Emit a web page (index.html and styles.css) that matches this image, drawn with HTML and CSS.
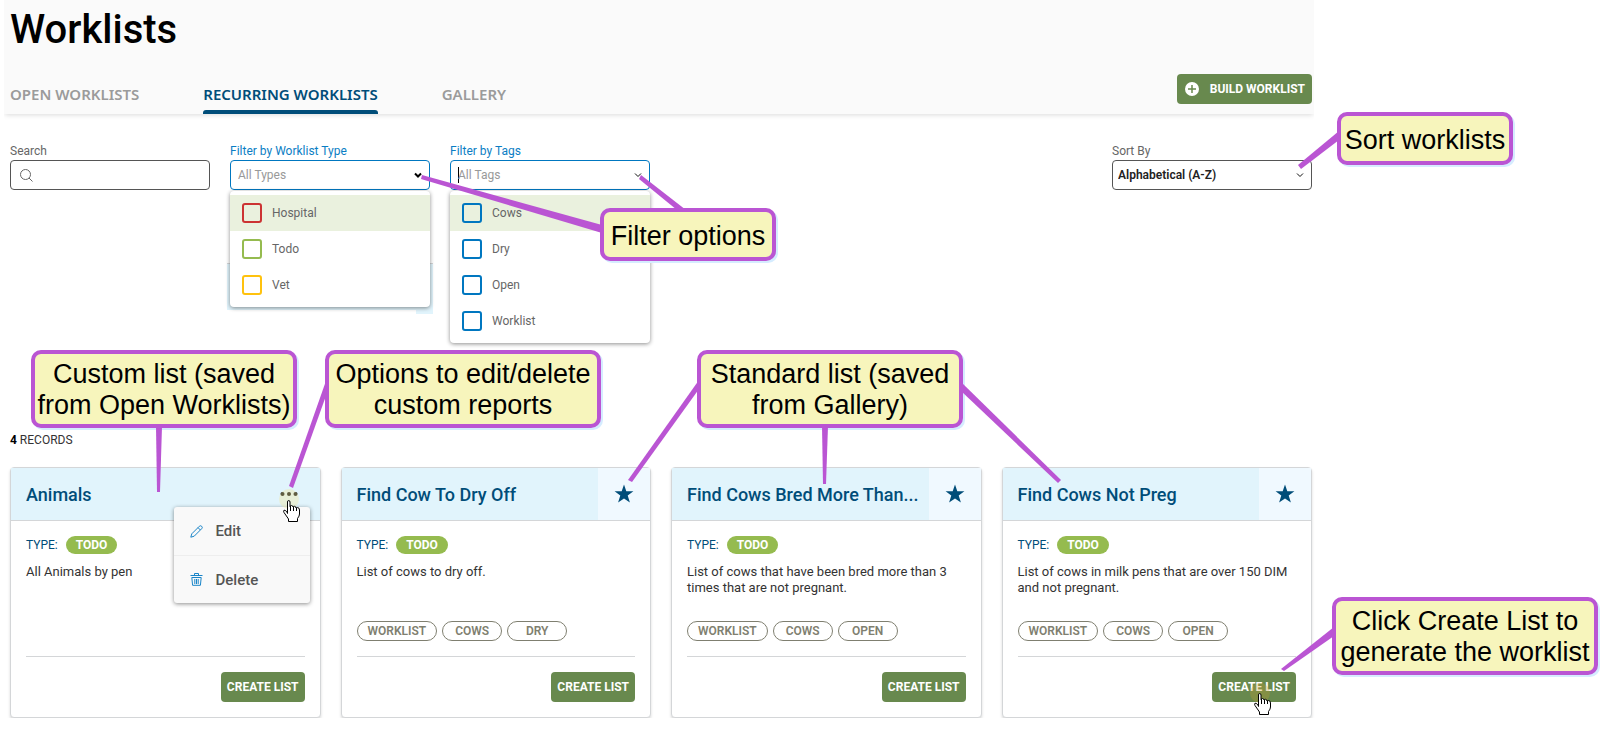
FILE: index.html
```
<!DOCTYPE html>
<html lang="en">
<head>
  <meta charset="UTF-8">
  <title>Worklists</title>
  <link rel="stylesheet" href="styles.css">
</head>
<body>

  <svg class="sprite" aria-hidden="true">
    <symbol id="star" viewBox="0 0 20 20">
      <path d="M10 0.5 L12.3 7.3 H19.4 L13.7 11.5 L15.9 18.6 L10 14.4 L4.1 18.6 L6.3 11.5 L0.6 7.3 H7.7 Z"/>
    </symbol>
    <symbol id="chevron" viewBox="0 0 8 8">
      <path d="M1 2.5 L4 5.5 L7 2.5" fill="none" stroke="currentColor"/>
    </symbol>
    <symbol id="hand" viewBox="0 0 17 22">
      <path d="M4.5 13.5 V2 Q4.5 0.5 5.7 0.5 T7 2 V6.5 Q7.2 5.5 8.5 5.5 T10 7 Q10.2 6.3 11.5 6.3 T13 8 Q13.3 7.5 14.3 7.5 Q16.5 7.5 16.5 10 V14 Q16.5 16 14.5 18.5 V21.5 H5.5 V19 L1 12.5 Q0.2 11 1 10.2 Q2.5 9.5 4.5 13 Z" fill="#fff" stroke="#000"/>
      <path d="M7.5 6 V11 M10.5 7 V11 M13.5 8 V11" fill="none" stroke="#000"/>
    </symbol>
  </svg>

  <div class="app">
    <header>
      <h1>Worklists</h1>
      <div class="bar">
        <nav>
          <a href="#open">OPEN WORKLISTS</a>
          <a href="#recurring" class="active">RECURRING WORKLISTS</a>
          <a href="#gallery">GALLERY</a>
        </nav>
        <button class="btn build" type="button">
          <svg width="14" height="14" viewBox="0 0 14 14"><circle cx="7" cy="7" r="7" fill="#fff"/><path d="M7 3 V11 M3 7 H11" stroke="#68894e" stroke-width="1.5"/></svg>
          BUILD WORKLIST
        </button>
      </div>
    </header>

    <main>
      <form class="filters">
        <div class="field">
          <label for="search">Search</label>
          <div class="box">
            <svg width="13" height="13" viewBox="0 0 13 13" fill="none" stroke="#666"><circle cx="5.5" cy="5.5" r="5"/><path d="M9 9 L12.5 12.5"/></svg>
            <input type="text" id="search">
          </div>
        </div>

        <div class="field open">
          <label for="types">Filter by Worklist Type</label>
          <div class="box">
            <input type="text" id="types" placeholder="All Types">
            <svg class="chevron dark"><use href="#chevron"/></svg>
          </div>
          <div class="under"></div>
          <div class="options">
            <label class="hover"><input type="checkbox" class="red">Hospital</label>
            <label><input type="checkbox" class="green">Todo</label>
            <label><input type="checkbox" class="yellow">Vet</label>
          </div>
        </div>

        <div class="field open">
          <label for="tags">Filter by Tags</label>
          <div class="box">
            <span class="caret"></span>
            <input type="text" id="tags" placeholder="All Tags">
            <svg class="chevron"><use href="#chevron"/></svg>
          </div>
          <div class="options">
            <label class="hover"><input type="checkbox">Cows</label>
            <label><input type="checkbox">Dry</label>
            <label><input type="checkbox">Open</label>
            <label><input type="checkbox">Worklist</label>
          </div>
        </div>

        <div class="field sort">
          <label for="sort">Sort By</label>
          <div class="box">
            <select id="sort">
              <option>Alphabetical (A-Z)</option>
            </select>
            <svg class="chevron"><use href="#chevron"/></svg>
          </div>
        </div>
      </form>

      <p class="records"><b>4</b> RECORDS</p>

      <div class="cards">
        <article class="card">
          <div class="card-head">
            <h2>Animals</h2>
            <button class="more" type="button" aria-label="Options">
              <svg width="18" height="4" viewBox="0 0 18 4"><circle cx="2.5" cy="2" r="2"/><circle cx="9" cy="2" r="2"/><circle cx="15.5" cy="2" r="2"/></svg>
            </button>
            <div class="menu">
              <button type="button">
                <svg width="13" height="13" viewBox="0 0 13 13" fill="none" stroke="#1a85c8"><path d="M0.8 12.2 L1.8 8.8 L9.3 1.3 Q10.5 0.2 11.7 1.3 T11.7 3.7 L4.2 11.2 Z M8 2.6 L10.4 5"/></svg>
                Edit
              </button>
              <button type="button">
                <svg width="13" height="13" viewBox="0 0 13 13" fill="none" stroke="#1a85c8"><path d="M0.5 2.5 H12.5 M4.5 2 V0.5 H8.5 V2 M1.8 4.5 H11.2 L10.4 12.3 H2.6 Z M4.8 6 V11 M6.5 6 V11 M8.2 6 V11"/></svg>
                Delete
              </button>
            </div>
          </div>
          <div class="card-body">
            <p class="type">TYPE: <span class="badge">TODO</span></p>
            <p class="desc">All Animals by pen</p>
            <div class="tags"></div>
            <div class="card-foot"><button class="btn" type="button">CREATE LIST</button></div>
          </div>
        </article>

        <article class="card">
          <div class="card-head">
            <h2>Find Cow To Dry Off</h2>
            <button class="fav" type="button" aria-label="Favorite"><svg width="20" height="20"><use href="#star"/></svg></button>
          </div>
          <div class="card-body">
            <p class="type">TYPE: <span class="badge">TODO</span></p>
            <p class="desc">List of cows to dry off.</p>
            <div class="tags"><span>WORKLIST</span><span>COWS</span><span>DRY</span></div>
            <div class="card-foot"><button class="btn" type="button">CREATE LIST</button></div>
          </div>
        </article>

        <article class="card">
          <div class="card-head">
            <h2>Find Cows Bred More Than...</h2>
            <button class="fav" type="button" aria-label="Favorite"><svg width="20" height="20"><use href="#star"/></svg></button>
          </div>
          <div class="card-body">
            <p class="type">TYPE: <span class="badge">TODO</span></p>
            <p class="desc">List of cows that have been bred more than 3 times that are not pregnant.</p>
            <div class="tags"><span>WORKLIST</span><span>COWS</span><span>OPEN</span></div>
            <div class="card-foot"><button class="btn" type="button">CREATE LIST</button></div>
          </div>
        </article>

        <article class="card">
          <div class="card-head">
            <h2>Find Cows Not Preg</h2>
            <button class="fav" type="button" aria-label="Favorite"><svg width="20" height="20"><use href="#star"/></svg></button>
          </div>
          <div class="card-body">
            <p class="type">TYPE: <span class="badge">TODO</span></p>
            <p class="desc">List of cows in milk pens that are over 150 DIM and not pregnant.</p>
            <div class="tags"><span>WORKLIST</span><span>COWS</span><span>OPEN</span></div>
            <div class="card-foot"><button class="btn" type="button">CREATE LIST</button></div>
          </div>
        </article>
      </div>
    </main>
  </div>

  <div class="callout c-filter">Filter options</div>
  <div class="callout c-sort">Sort worklists</div>
  <div class="callout two c-custom">Custom list (saved<br>from Open Worklists)</div>
  <div class="callout two c-options">Options to edit/delete<br>custom reports</div>
  <div class="callout two c-standard">Standard list (saved<br>from Gallery)</div>
  <div class="callout two c-create">Click Create List to<br>generate the worklist</div>

  <!-- callout pointers and mouse cursors -->
  <svg class="pointers" width="1615" height="735" viewBox="0 0 1615 735">
    <g fill="#ba55d3">
      <path d="M422 175 L602 225 V233 L421 179 Z"/>
      <path d="M641 175 L686 210 H677 L639 179 Z"/>
      <path d="M1298 165 L1339 131 V140 L1301 169 Z"/>
      <path d="M156 426 H162 L160 492 H157 Z"/>
      <path d="M289 486 L327 378 V393 L293 488 Z"/>
      <path d="M628 480 L699 380 V389 L632 482 Z"/>
      <path d="M822 426 H828 L826 484 H823 Z"/>
      <path d="M961 382 L1061 480 L1058 483 L961 391 Z"/>
      <path d="M1281 669 L1334 627 V636 L1284 671 Z"/>
    </g>
    <circle cx="289" cy="499" r="10" fill="#f0e6a0" fill-opacity="0.4"/>
    <use href="#hand" x="283" y="500" width="17" height="22"/>
    <circle cx="1260" cy="693" r="10" fill="#c8a030" fill-opacity="0.3"/>
    <use href="#hand" x="1254" y="693" width="17" height="22"/>
  </svg>

</body>
</html>
```

FILE: styles.css
```
* {
  box-sizing: border-box;
}

body {
  margin: 0;
  background-color: #fff;
  color: #333;
  font-family: Roboto, "Liberation Sans", sans-serif;
  font-size: 13px;
  line-height: 16px;
}

h1, h2, p {
  margin: 0;
}

button, input, select {
  font-family: inherit;
}

.sprite {
  display: none;
}

/* room on the right for the callouts */
.app {
  margin-right: 301px;
}

header {
  margin-left: 4px;
  padding: 6px 2px 0 6px;
  background-color: #fafafa;
  box-shadow: 0 2px 5px -1px rgba(0,0,0,0.15);
  clip-path: inset(0 0 -8px 0);
}

h1 {
  color: #000;
  font-size: 40px;
  line-height: 48px;
  font-weight: 500;
}

.bar {
  display: flex;
  justify-content: space-between;
  align-items: flex-start;
  margin-top: 20px;
}

nav {
  display: flex;
  gap: 64px;
}

nav a {
  position: relative;
  height: 40px;
  padding-top: 10px;
  color: #9b9b9b;
  font-family: "Noto Sans", sans-serif;
  font-size: 15px;
  line-height: 20px;
  font-weight: 600;
  text-decoration: none;
}

nav a.active {
  color: #004d79;
}

nav a.active::after {
  content: "";
  position: absolute;
  left: 0;
  right: 0;
  bottom: 0;
  height: 4px;
  border-radius: 3px 3px 0 0;
  background-color: #004d79;
}

.btn {
  height: 30px;
  padding: 0 6px;
  border: none;
  border-radius: 4px;
  background-color: #68894e;
  color: #fff;
  font-size: 12px;
  font-weight: 700;
  cursor: pointer;
}

.build {
  display: flex;
  align-items: center;
  gap: 11px;
  padding: 0 7px 0 8px;
}

main {
  padding: 29px 2px 0 10px;
}

.filters {
  display: flex;
  gap: 20px;
}

.field {
  position: relative;
  width: 200px;
  color: #666;
  font-size: 12px;
}

.field > label {
  display: block;
  margin-bottom: 1px;
}

.open > label {
  color: #0b7ec4;
}

.sort {
  margin-left: auto;
}

.box {
  display: flex;
  align-items: center;
  height: 30px;
  padding: 0 7px;
  border: 1px solid #555;
  border-radius: 4px;
  background-color: #fff;
}

#search {
  margin-left: 8px;
}

.box svg:first-child {
  margin-left: 2px;
}

.open .box {
  border-color: #0077c0;
}

.box input, .box select {
  flex: 1;
  min-width: 0;
  padding: 0;
  border: none;
  outline: none;
  background: none;
  font-size: 12px;
}

.sort .box {
  padding-left: 5px;
}

.box select {
  appearance: none;
  color: #222;
  font-weight: 600;
}

.box input::placeholder {
  color: #999;
}

.caret {
  width: 1px;
  height: 16px;
  margin-right: -1px;
  background-color: #000;
}

.chevron {
  width: 8px;
  height: 8px;
  color: #111;
}

.dark {
  color: #000;
  stroke-width: 2px;
}

/* edge of the card that lies under the open list */
.under {
  position: absolute;
  top: 120px;
  left: -3px;
  width: 206px;
  height: 47px;
  border-top: 1px solid #d4d6d8;
  background-color: #e1f4fc;
}

.under::after {
  content: "";
  position: absolute;
  top: 100%;
  right: 0;
  width: 17px;
  height: 4px;
  background-color: #e1f4fc;
}

.options {
  position: absolute;
  top: 48px;
  left: 0;
  width: 100%;
  padding: 4px 0;
  border-radius: 4px;
  background-color: #fff;
  box-shadow: 0 1px 4px rgba(0,0,0,0.45);
}

.options label {
  display: flex;
  align-items: center;
  gap: 10px;
  height: 36px;
  padding-left: 12px;
}

.options .hover {
  background-color: #eaf1de;
}

.options input {
  appearance: none;
  width: 20px;
  height: 20px;
  margin: 0;
  border: 2px solid #0077c0;
  border-radius: 3px;
}

.options .red {
  border-color: #cc3333;
}

.options .green {
  border-color: #95bb4f;
}

.options .yellow {
  border-color: #ffc20e;
}

.records {
  margin: 242px 0 19px;
  font-size: 12px;
}

.records b {
  color: #000;
}

.cards {
  display: grid;
  grid-template-columns: repeat(4, 1fr);
  gap: 20px;
}

.card {
  border: 1px solid #d4d6d8;
  border-radius: 4px;
  background-color: #fff;
  box-shadow: 0 2px 3px rgba(0,0,0,0.15);
}

.card-head {
  position: relative;
  display: flex;
  height: 53px;
  border-bottom: 1px solid #d4d6d8;
  background-color: #e1f4fc;
}

h2 {
  flex: 1;
  padding-left: 15px;
  color: #004d79;
  font-size: 18px;
  line-height: 53px;
  font-weight: 500;
  white-space: nowrap;
}

.fav {
  width: 52px;
  padding: 0;
  border: none;
  background-color: #f0f9ff;
  fill: #004d79;
}

.fav svg {
  display: block;
  margin: 0 auto;
}

.more {
  width: 62px;
  padding: 0;
  border: none;
  background: none;
}

.more svg {
  display: block;
  margin: 0 auto;
}

.menu {
  position: absolute;
  top: 39px;
  right: 10px;
  width: 136px;
  border-radius: 3px;
  background-color: #f9f9f9;
  box-shadow: 0 1px 4px rgba(0,0,0,0.45);
}

.menu button {
  display: flex;
  align-items: center;
  gap: 13px;
  width: 100%;
  height: 48px;
  padding: 0 16px;
  border: none;
  background: none;
  color: #555;
  font-size: 15px;
  font-weight: 500;
}

.menu button + button {
  border-top: 1px solid #eee;
}

.card-body {
  padding: 15px;
}

.type {
  display: flex;
  align-items: center;
  gap: 8px;
  height: 18px;
  color: #004d79;
  font-size: 12px;
}

.badge {
  padding: 0 10px;
  border-radius: 9px;
  background-color: #95bb4f;
  color: #fff;
  font-size: 12px;
  line-height: 18px;
  font-weight: 700;
}

.desc {
  height: 48px;
  margin-top: 10px;
}

.tags {
  display: flex;
  gap: 5px;
  height: 20px;
  margin: 9px 0 15px;
}

.tags span {
  min-width: 60px;
  padding: 0 10px;
  border: 1px solid #7f7f70;
  border-radius: 10px;
  color: #7f7f70;
  font-size: 12px;
  line-height: 18px;
  font-weight: 600;
  text-align: center;
}

.card-foot {
  padding-top: 15px;
  border-top: 1px solid #d4d6d8;
}

.card-foot .btn {
  display: block;
  margin-left: auto;
}

.pointers {
  position: absolute;
  top: 0;
  left: 0;
  pointer-events: none;
}

.callout {
  position: absolute;
  padding: 9px 0 5px;
  border: 4px solid #ba55d3;
  border-radius: 10px;
  background-color: #f7f5bc;
  box-shadow: 2px 2px 0 #d5ecff;
  color: #000;
  font-family: "Liberation Sans", Arial, sans-serif;
  font-size: 27px;
  line-height: 31px;
  text-align: center;
  white-space: nowrap;
}

.two {
  padding: 5px 0 3px;
}

.c-filter {
  top: 208px;
  left: 600px;
  width: 176px;
}

.c-sort {
  top: 112px;
  left: 1337px;
  width: 176px;
}

.c-custom {
  top: 350px;
  left: 31px;
  width: 266px;
}

.c-options {
  top: 350px;
  left: 325px;
  width: 276px;
}

.c-standard {
  top: 350px;
  left: 697px;
  width: 266px;
}

.c-create {
  top: 597px;
  left: 1332px;
  width: 266px;
}
```
